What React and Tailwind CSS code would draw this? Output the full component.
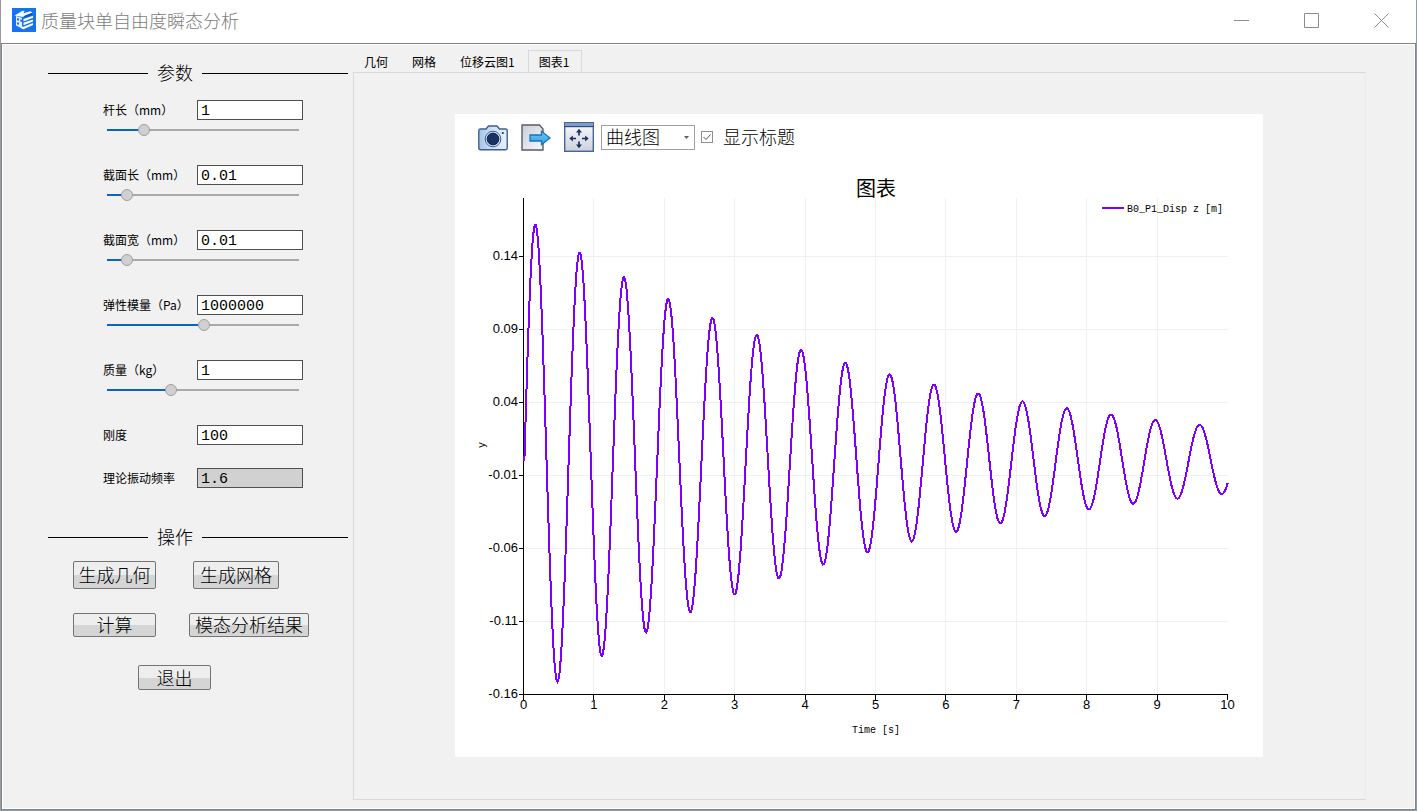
import React, { useState } from "react";

const parameters = [
  { id: "length", label: "杆长（mm）", value: "1", slider: 17.5 },
  { id: "sectionLength", label: "截面长（mm）", value: "0.01", slider: 7.5 },
  { id: "sectionWidth", label: "截面宽（mm）", value: "0.01", slider: 7.5 },
  { id: "modulus", label: "弹性模量（Pa）", value: "1000000", slider: 50.5 },
  { id: "mass", label: "质量（kg）", value: "1", slider: 32 },
];

const tabs = ["几何", "网格", "位移云图1", "图表1"];

// Plot area inside the 808 x 599 chart
const X0 = 68.5;
const X_STEP = 70.4;
const TOP = 40;
const BOTTOM = 536.5;
const RIGHT = 773;
const ZERO = 302.5;
const Y_SCALE = 1460;
const yTicks = ["0.14", "0.09", "0.04", "-0.01", "-0.06", "-0.11", "-0.16"];

const buildCurve = () => {
  const points = [`${X0},${ZERO}`];
  for (let t = 0.013; t <= 10.01; t += 0.01) {
    const disp = 0.1671 * Math.exp(-0.2 * t) * Math.sin(9.988 * t - 0.127);
    points.push(`${(X0 + t * X_STEP).toFixed(2)},${(ZERO - disp * Y_SCALE).toFixed(2)}`);
  }
  return points.join(" ");
};

const curve = buildCurve();

const Logo = () => (
  <svg viewBox="0 0 24 24" className="h-6 w-6" aria-hidden="true">
    <rect width="24" height="24" fill="#1673f0" />
    <path d="M2.5 7.5 L10.5 2.8 L12.5 3 L11.5 5.2 L18.5 3.2 L20.5 4.5 L10.5 9 Z" fill="#f4f8ff" />
    <path d="M4 8 L10 10 V20.5 L4 17.5 Z" fill="#e3eeff" />
    <path d="M5 10 L7 10.6 V12.8 L5 12.2 Z M5 14.2 L7 14.8 V16.8 L5 16.2 Z M8.2 11.2 L10 11.8 V14 L8.2 13.4 Z" fill="#1673f0" />
    <path d="M12.5 7.8 L20 5 L20.5 7 L12 9.8 Z" fill="#0c4fc0" />
    <path d="M11.5 11 L21 7.8 V9.8 L11.5 13.4 Z M11.5 14.8 L21 11.4 V13.4 L11.5 17.2 Z M9.5 18.6 L11.5 18.8 L21 15 V17 L11.5 21.3 L9.5 20.4 Z" fill="#fff" />
  </svg>
);

const CameraIcon = () => (
  <svg viewBox="0 0 30 30" className="h-[30px] w-[30px]" aria-hidden="true">
    <defs>
      <linearGradient id="cameraBody" x1="0" y1="0" x2="1" y2="0">
        <stop offset="0" stopColor="#a9c5e6" />
        <stop offset="0.5" stopColor="#cfe2f5" />
        <stop offset="1" stopColor="#e6f1fc" />
      </linearGradient>
    </defs>
    <path
      d="M2.5 7 H8 L10.5 4 H19 L21.5 7 H27.5 Q29.2 7 29.2 8.7 V26.1 Q29.2 27.8 27.5 27.8 H2.5 Q0.8 27.8 0.8 26.1 V8.7 Q0.8 7 2.5 7 Z"
      fill="url(#cameraBody)"
      stroke="#3d5f92"
      strokeWidth="1.4"
    />
    <circle cx="15" cy="17" r="7.8" fill="#dceafa" stroke="#3d5f92" />
    <circle cx="15" cy="17" r="5.9" fill="#1b3263" stroke="#10224a" />
    <circle cx="24.8" cy="11" r="1.1" fill="#1b3263" />
  </svg>
);

const ExportIcon = () => (
  <svg viewBox="0 0 30 30" className="h-[30px] w-[30px]" aria-hidden="true">
    <defs>
      <linearGradient id="sheet" x1="0" y1="0" x2="1" y2="1">
        <stop offset="0" stopColor="#c9ccda" />
        <stop offset="1" stopColor="#fafafc" />
      </linearGradient>
      <linearGradient id="arrow" x1="0" y1="0" x2="0" y2="1">
        <stop offset="0" stopColor="#74c8f2" />
        <stop offset="1" stopColor="#2f9fe0" />
      </linearGradient>
    </defs>
    <path d="M1 3 H18.5 L22 7 V28 H1 Z" fill="url(#sheet)" stroke="#5a5c60" strokeWidth="1.4" />
    <path d="M9 13 H20.5 V9.3 L29 16 L20.5 22.7 V19 H9 Z" fill="url(#arrow)" stroke="#1474b8" strokeWidth="1.3" />
  </svg>
);

const FitIcon = () => (
  <svg viewBox="0 0 30 30" className="h-[30px] w-[30px]" aria-hidden="true">
    <defs>
      <linearGradient id="pane" x1="0" y1="0" x2="0" y2="1">
        <stop offset="0" stopColor="#fbfbfd" />
        <stop offset="1" stopColor="#cdd0dc" />
      </linearGradient>
    </defs>
    <rect x="0.7" y="0.7" width="28.6" height="28.6" fill="url(#pane)" stroke="#48659a" strokeWidth="1.4" />
    <rect x="1" y="1" width="28" height="3" fill="#7f9cc8" />
    <path d="M0 4.6 H30" stroke="#2f4c80" strokeWidth="1.2" />
    <path d="M15 9.5 V13.5 M15 19.5 V23.5 M8 16.5 H12 M18 16.5 H22" stroke="#1b3263" strokeWidth="1.7" />
    <path d="M15 6.8 L18 10.4 H12 Z M15 26.2 L18 22.6 H12 Z M5.3 16.5 L8.9 13.5 V19.5 Z M24.7 16.5 L21.1 13.5 V19.5 Z" fill="#1b3263" />
  </svg>
);

const SectionTitle = ({ children }) => (
  <div className="ml-[45px] mr-[5px] flex h-7 items-center gap-[9px]">
    <div className="h-px w-[100px] bg-black" />
    <h2 className="pb-0.5 text-lg font-light leading-7">{children}</h2>
    <div className="h-px flex-1 bg-black" />
  </div>
);

const Field = ({ id, label, value, onChange, readOnly }) => (
  <div className="flex h-5 items-center justify-between">
    <label htmlFor={id} className="whitespace-nowrap text-xs">
      {label}
    </label>
    <input
      id={id}
      type="text"
      value={value}
      onChange={onChange}
      readOnly={readOnly}
      className="h-5 w-[106px] border border-[#4f4f4f] bg-white px-[3px] pt-0.5 font-['Liberation_Mono',monospace] text-[15px] leading-4 outline-none read-only:bg-[#d1d1d1]"
    />
  </div>
);

const ParameterField = ({ id, label, initialValue, initialSlider }) => {
  const [value, setValue] = useState(initialValue);
  const [slider, setSlider] = useState(initialSlider);

  return (
    <div className="h-[65px]">
      <Field id={id} label={label} value={value} onChange={(e) => setValue(e.target.value)} />
      <input
        type="range"
        aria-label={label}
        min="0"
        max="100"
        step="0.5"
        value={slider}
        onChange={(e) => setSlider(Number(e.target.value))}
        style={{ backgroundImage: `linear-gradient(to right, #0a66bd ${slider}%, #a9a9a9 ${slider}%)` }}
        className="ml-1 mt-1 block h-3 w-48 appearance-none bg-[length:100%_2px] bg-center bg-no-repeat [&::-webkit-slider-thumb]:h-3 [&::-webkit-slider-thumb]:w-3 [&::-webkit-slider-thumb]:appearance-none [&::-webkit-slider-thumb]:rounded-full [&::-webkit-slider-thumb]:border [&::-webkit-slider-thumb]:border-[#a0a0a0] [&::-webkit-slider-thumb]:bg-[#d0d0d0]"
      />
    </div>
  );
};

const ActionButton = ({ className, children }) => (
  <button
    type="button"
    className={`flex items-center justify-center whitespace-nowrap rounded-xs border border-[#747474] bg-linear-to-b from-[#eeeeee] from-50% to-[#d5d5d5] to-50% pb-0.5 text-lg font-light leading-5 ${className}`}
  >
    {children}
  </button>
);

const Chart = ({ showTitle }) => (
  <svg viewBox="0 0 808 599" className="block w-full" role="img" aria-label="图表">
    <g stroke="#f0f0f0" shapeRendering="crispEdges">
      {yTicks.slice(0, 6).map((tick, i) => (
        <line key={tick} x1={X0} x2={RIGHT} y1={98.5 + i * 73} y2={98.5 + i * 73} />
      ))}
      {[1, 2, 3, 4, 5, 6, 7, 8, 9].map((i) => (
        <line key={i} x1={X0 + i * X_STEP} x2={X0 + i * X_STEP} y1={TOP} y2={BOTTOM} />
      ))}
    </g>

    <g stroke="#000" shapeRendering="crispEdges">
      <line x1={X0} x2={X0} y1={TOP} y2={BOTTOM + 5} />
      <line x1={X0 - 5} x2={RIGHT} y1={BOTTOM} y2={BOTTOM} />
      {yTicks.map((tick, i) => (
        <line key={tick} x1={X0 - 5} x2={X0} y1={98.5 + i * 73} y2={98.5 + i * 73} />
      ))}
      {[1, 2, 3, 4, 5, 6, 7, 8, 9, 10].map((i) => (
        <line key={i} x1={X0 + i * X_STEP} x2={X0 + i * X_STEP} y1={BOTTOM} y2={BOTTOM + 5} />
      ))}
    </g>

    <g className="font-['Liberation_Sans',sans-serif] text-[13px]">
      {yTicks.map((tick, i) => (
        <text key={tick} x="63" y={102 + i * 73} textAnchor="end">
          {tick}
        </text>
      ))}
      {[0, 1, 2, 3, 4, 5, 6, 7, 8, 9, 10].map((i) => (
        <text key={i} x={X0 + i * X_STEP} y="551" textAnchor="middle">
          {i}
        </text>
      ))}
    </g>

    <polyline points={curve} fill="none" stroke="#7f00ff" strokeWidth="2" shapeRendering="crispEdges" />

    {showTitle && (
      <text x="421" y="38" textAnchor="middle" className="text-xl">
        图表
      </text>
    )}

    <line x1="647" x2="669" y1="50" y2="50" stroke="#7f00ff" strokeWidth="2" />
    <g className="font-['Liberation_Mono',monospace] text-[10px]">
      <text x="672" y="54">B0_P1_Disp z [m]</text>
      <text x="421" y="575" textAnchor="middle">Time [s]</text>
      <text transform="translate(30 287) rotate(-90)" textAnchor="middle">y</text>
    </g>
  </svg>
);

const ChartCard = () => {
  const [chartType, setChartType] = useState("曲线图");
  const [showTitle, setShowTitle] = useState(true);

  return (
    <div className="bg-white">
      <div className="flex h-11 items-center pl-[23px] pt-0.5 text-lg font-light">
        <div className="flex gap-[13px]">
          <button type="button" aria-label="截图">
            <CameraIcon />
          </button>
          <button type="button" aria-label="导出">
            <ExportIcon />
          </button>
          <button type="button" aria-label="适应窗口">
            <FitIcon />
          </button>
        </div>
        <div className="relative ml-[7px]">
          <select
            aria-label="图表类型"
            value={chartType}
            onChange={(e) => setChartType(e.target.value)}
            className="block h-[25px] w-[94px] appearance-none border border-[#a0a0a0] bg-white pb-0.5 pl-1 leading-5 outline-none"
          >
            <option>曲线图</option>
            <option>散点图</option>
          </select>
          <svg viewBox="0 0 5 3" className="pointer-events-none absolute right-1.5 top-[11px] h-[3px] w-[5px]" aria-hidden="true">
            <path d="M0 0 H5 L2.5 3 Z" fill="#5f5f5f" />
          </svg>
        </div>
        <label className="ml-1.5 flex items-center gap-2.5">
          <span className="grid">
            <input
              type="checkbox"
              checked={showTitle}
              onChange={(e) => setShowTitle(e.target.checked)}
              className="peer col-start-1 row-start-1 h-3 w-3 appearance-none border border-[#8f8f8f] bg-white"
            />
            <svg viewBox="0 0 12 12" className="pointer-events-none invisible col-start-1 row-start-1 h-3 w-3 peer-checked:visible" aria-hidden="true">
              <path d="M2.5 6 L5 8.5 L9.5 3.5" fill="none" stroke="#555" />
            </svg>
          </span>
          <span className="pb-0.5">显示标题</span>
        </label>
      </div>
      <Chart showTitle={showTitle} />
    </div>
  );
};

const App = () => {
  const [activeTab, setActiveTab] = useState("图表1");
  const [stiffness, setStiffness] = useState("100");

  return (
    <div className="flex min-h-screen flex-col bg-[#969ba1] px-px pb-px font-['Noto_Sans_CJK_SC',sans-serif] text-black">
      <header className="flex h-[43px] items-center bg-white pb-[3px] pl-[11px]">
        <Logo />
        <h1 className="ml-[5px] flex-1 text-lg font-light leading-7 text-[#7c7c7c]">质量块单自由度瞬态分析</h1>
        <div className="flex">
          {[
            { name: "最小化", d: "M0 7.5 H15" },
            { name: "最大化", d: "M0.5 0.5 H14.5 V14.5 H0.5 Z" },
            { name: "关闭", d: "M0.5 0.5 L14.5 14.5 M14.5 0.5 L0.5 14.5" },
          ].map((control) => (
            <button key={control.name} type="button" aria-label={control.name} className="flex h-10 w-[70px] items-center justify-center">
              <svg viewBox="0 0 15 15" className="h-[15px] w-[15px]" aria-hidden="true">
                <path d={control.d} fill="none" stroke="#8c8c8c" />
              </svg>
            </button>
          ))}
        </div>
      </header>

      <div className="flex flex-1 border border-[#82868b]">
        <div className="flex flex-1 border border-white bg-[#f1f1f1]">
          <aside className="w-[350px] shrink-0 pt-3.5">
            <SectionTitle>参数</SectionTitle>
            <form className="ml-[100px] mt-[13px] w-[200px]">
              {parameters.map((param) => (
                <ParameterField
                  key={param.id}
                  id={param.id}
                  label={param.label}
                  initialValue={param.value}
                  initialSlider={param.slider}
                />
              ))}
              <div className="flex flex-col gap-[23px]">
                <Field id="stiffness" label="刚度" value={stiffness} onChange={(e) => setStiffness(e.target.value)} />
                <Field id="frequency" label="理论振动频率" value="1.6" readOnly />
              </div>
            </form>

            <div className="mt-[35px]">
              <SectionTitle>操作</SectionTitle>
              <div className="mt-2.5 flex flex-col gap-6 pl-[70px]">
                <div className="flex gap-[37px]">
                  <ActionButton className="h-7 w-[83px]">生成几何</ActionButton>
                  <ActionButton className="h-7 w-[86px]">生成网格</ActionButton>
                </div>
                <div className="flex gap-[33px]">
                  <ActionButton className="h-6 w-[83px]">计算</ActionButton>
                  <ActionButton className="h-6 w-[120px]">模态分析结果</ActionButton>
                </div>
                <div className="pl-[65px] pt-1">
                  <ActionButton className="h-[25px] w-[73px]">退出</ActionButton>
                </div>
              </div>
            </div>
          </aside>

          <main className="flex flex-1 flex-col pb-2 pr-12 pt-[5px]">
            <div role="tablist" className="flex h-[22px]">
              {tabs.map((tab) => (
                <button
                  key={tab}
                  type="button"
                  role="tab"
                  aria-selected={activeTab === tab}
                  onClick={() => setActiveTab(tab)}
                  className="border border-b-0 border-transparent pl-2.5 pr-3 text-xs aria-selected:border-[#d9d9d9]"
                >
                  {tab}
                </button>
              ))}
            </div>
            <div role="tabpanel" className="flex-1 border border-[#d9d9d9] border-r-[#ececec] pb-[42px] pl-[101px] pr-[102px] pt-[41px]">
              <ChartCard />
            </div>
          </main>
        </div>
      </div>
    </div>
  );
};

export default App;
